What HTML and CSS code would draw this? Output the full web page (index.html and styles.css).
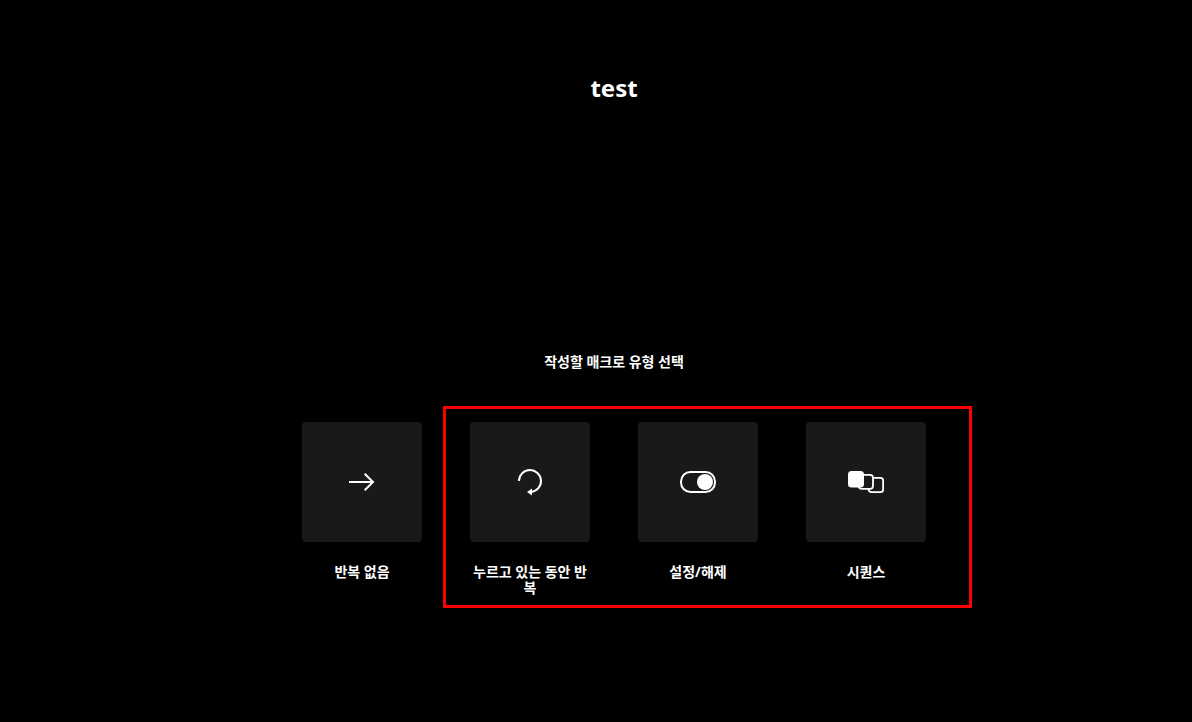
FILE: index.html
```html
<!DOCTYPE html>
<html lang="ko">
<head>
<meta charset="utf-8">
<meta name="viewport" content="width=device-width, initial-scale=1">
<title>test</title>
<link rel="stylesheet" href="styles.css">
</head>
<body>
<main class="page">
  <h1 class="title">test</h1>
  <h2 class="prompt">작성할 매크로 유형 선택</h2>
  <div class="options">
    <button class="option" type="button">
      <span class="tile">
        <svg class="icon" viewBox="0 0 40 32" aria-hidden="true"><path d="M7 16H31.500M22.700 7.700L31 16L22.700 24.300" fill="none" stroke="#fff" stroke-width="2"/></svg>
      </span>
      <span class="label">반복 없음</span>
    </button>
    <div class="highlighted">
      <button class="option" type="button">
        <span class="tile">
          <svg class="icon" viewBox="0 0 40 32" aria-hidden="true"><path d="M9 15A11 11 0 1 1 21 26" fill="none" stroke="#fff" stroke-width="2"/><path d="M17 26L22 22.500V29.500Z" fill="#fff"/></svg>
        </span>
        <span class="label">누르고 있는 동안 반복</span>
      </button>
      <button class="option" type="button">
        <span class="tile">
          <svg class="icon" viewBox="0 0 40 32" aria-hidden="true"><rect x="3" y="6" width="34" height="20" rx="9.500" fill="none" stroke="#fff" stroke-width="2"/><circle cx="27" cy="16" r="8" fill="#fff"/></svg>
        </span>
        <span class="label">설정/해제</span>
      </button>
      <button class="option" type="button">
        <span class="tile">
          <svg class="icon" viewBox="0 0 40 32" aria-hidden="true"><g fill="none" stroke="#fff" stroke-width="1.800"><path d="M18 8.900H24Q27 8.900 27 11.900V19.500Q27 22.900 24 22.900H16Q13.500 22.900 12.500 21"/><path d="M27 11.900H34.500Q37.100 11.900 37.100 14.500V23.500Q37.100 26.100 34.500 26.100H25.500Q22.800 26.100 22.500 23"/></g><rect x="2" y="5" width="16" height="16.500" rx="3.500" fill="#fff"/></svg>
        </span>
        <span class="label">시퀀스</span>
      </button>
    </div>
  </div>
</main>
</body>
</html>
```
FILE: styles.css
```css
* {
  box-sizing: border-box;
}

body {
  margin: 0;
  background: #000;
  color: #fff;
  font-family: "Noto Sans", "Noto Sans CJK KR", sans-serif;
}

.page {
  display: flex;
  flex-direction: column;
  align-items: center;
  min-height: 100vh;
  padding: 72px 0 72px 36px;
}

.title {
  margin: 0 0 250px;
  font-size: 24px;
  line-height: 32px;
  font-weight: 700;
}

.prompt {
  margin: 0 0 52px;
  font-size: 14px;
  line-height: 16px;
  font-weight: 700;
}

.options,
.highlighted {
  display: flex;
  align-items: flex-start;
  gap: 48px;
}

.highlighted {
  position: relative;
}

.highlighted::after {
  content: "";
  position: absolute;
  inset: -16px -46px -12px -27px;
  border: 3px solid #f00;
  pointer-events: none;
}

.option {
  display: flex;
  flex-direction: column;
  gap: 22px;
  width: 120px;
  padding: 0;
  border: 0;
  background: none;
  color: inherit;
  font: inherit;
  cursor: pointer;
}

.tile {
  display: flex;
  align-items: center;
  justify-content: center;
  height: 120px;
  border-radius: 4px;
  background: #191919;
}

.icon {
  width: 40px;
  height: 32px;
}

.label {
  width: 100%;
  font-size: 14px;
  line-height: 16px;
  font-weight: 700;
  text-align: center;
}
```
